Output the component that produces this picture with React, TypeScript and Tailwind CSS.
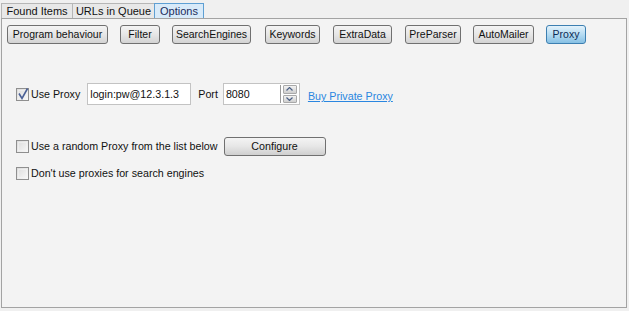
import React from "react";

const font = { fontFamily: '"Liberation Sans", Arial, sans-serif' };

const tabs = [
  { label: "Found Items", w: "w-[72px]", active: false },
  { label: "URLs in Queue", w: "w-[83px]", active: false },
  { label: "Options", w: "w-[50px]", active: true },
];

const sections = [
  { label: "Program behaviour", cls: "ml-[5px] w-[101px]" },
  { label: "Filter", cls: "ml-[12px] w-[40px]" },
  { label: "SearchEngines", cls: "ml-[12px] w-[79px]" },
  { label: "Keywords", cls: "ml-[14px] w-[55px]" },
  { label: "ExtraData", cls: "ml-[13px] w-[59px]" },
  { label: "PreParser", cls: "ml-[13px] w-[56px]" },
  { label: "AutoMailer", cls: "ml-[12px] w-[61px]" },
  { label: "Proxy", cls: "ml-[12px] w-[40px]", active: true },
];

function Checkbox({ checked }: { checked?: boolean }) {
  return (
    <span className="relative inline-flex h-[13px] w-[13px] shrink-0 border border-[#8f8f8f] bg-gradient-to-br from-[#dcdcdc] to-[#f8f8f8]">
      <span className="absolute inset-[1px] border border-[#f4f4f4]/60" />
      {checked && (
        <svg className="absolute -left-[1px] -top-[2px]" width="14" height="14" viewBox="0 0 14 14">
          <path d="M3 6.5 L6 11.5 L11.5 1.5" fill="none" stroke="#4a6096" strokeWidth="1.6" />
        </svg>
      )}
    </span>
  );
}

function Spinner() {
  return (
    <div className="flex h-[18px] w-[14px] flex-col gap-[1px]">
      <div className="flex flex-1 items-center justify-center rounded-[1px] border border-[#a9a9a9] bg-gradient-to-b from-[#f2f2f2] to-[#cfcfcf]">
        <svg width="7" height="4" viewBox="0 0 7 4">
          <path d="M0.5 3.5 L3.5 0.5 L6.5 3.5" fill="none" stroke="#4d6185" strokeWidth="1.2" />
        </svg>
      </div>
      <div className="flex flex-1 items-center justify-center rounded-[1px] border border-[#a9a9a9] bg-gradient-to-b from-[#f2f2f2] to-[#cfcfcf]">
        <svg width="7" height="4" viewBox="0 0 7 4">
          <path d="M0.5 0.5 L3.5 3.5 L6.5 0.5" fill="none" stroke="#4d6185" strokeWidth="1.2" />
        </svg>
      </div>
    </div>
  );
}

export default function App() {
  return (
    <div className="h-[311px] w-[629px] bg-[#f0f0f0] pl-[1px] pt-[3px] text-[10.7px] text-[#111]" style={font}>
      <div className="flex h-[15px] text-[11px]">
        {tabs.map((t) => (
          <div
            key={t.label}
            className={`flex ${t.w} items-center justify-center border border-b-0 leading-none ${
              t.active
                ? "border-[#5e9fd3] bg-[#d8eaf9] text-[#1c2c5c]"
                : "-mr-[1px] border-[#b6b6b6] bg-[#e8e8e8]"
            }`}
          >
            {t.label}
          </div>
        ))}
      </div>
      <div className="h-[290px] w-[626px] border border-[#a3a3a3] bg-[#f3f3f3]">
        <div className="flex pt-[6px] text-[10.5px]">
          {sections.map((s) => (
            <button
              key={s.label}
              className={`${s.cls} h-[19px] rounded-[3px] border leading-none ${
                s.active
                  ? "border-[#3c7fb1] bg-gradient-to-b from-[#e3f2fb] via-[#b5dbf2] to-[#86c0e4] text-[#0d2b55]"
                  : "border-[#707070] bg-gradient-to-b from-[#f4f4f4] via-[#e6e6e6] to-[#d3d3d3]"
              }`}
            >
              {s.label}
            </button>
          ))}
        </div>

        <div className="mt-[39px] flex items-center pl-[14px]">
          <Checkbox checked />
          <span className="ml-[2px]">Use Proxy</span>
          <div className="ml-[7px] flex h-[22px] w-[104px] items-center border border-[#c3c3c3] bg-white pl-[2px]">
            login:pw@12.3.1.3
          </div>
          <span className="ml-[7px]">Port</span>
          <div className="ml-[5px] flex h-[22px] w-[77px] items-center justify-between border border-[#c3c3c3] bg-white pl-[2px] pr-[2px]">
            <span>8080</span>
            <div className="flex items-center">
              <div className="mr-[2px] h-[18px] w-[1px] bg-[#9a9a9a]" />
              <Spinner />
            </div>
          </div>
          <a className="ml-[8px] mt-[4px] text-[#2a86e0] underline">Buy Private Proxy</a>
        </div>

        <div className="mt-[32px] flex items-center pl-[14px]">
          <Checkbox />
          <span className="ml-[2px]">Use a random Proxy from the list below</span>
          <button className="ml-[6px] h-[19px] w-[102px] rounded-[3px] border border-[#707070] bg-gradient-to-b from-[#f4f4f4] via-[#e6e6e6] to-[#cfcfcf] leading-none">
            Configure
          </button>
        </div>

        <div className="mt-[9px] flex items-center pl-[14px]">
          <Checkbox />
          <span className="ml-[2px]">Don't use proxies for search engines</span>
        </div>
      </div>
    </div>
  );
}
